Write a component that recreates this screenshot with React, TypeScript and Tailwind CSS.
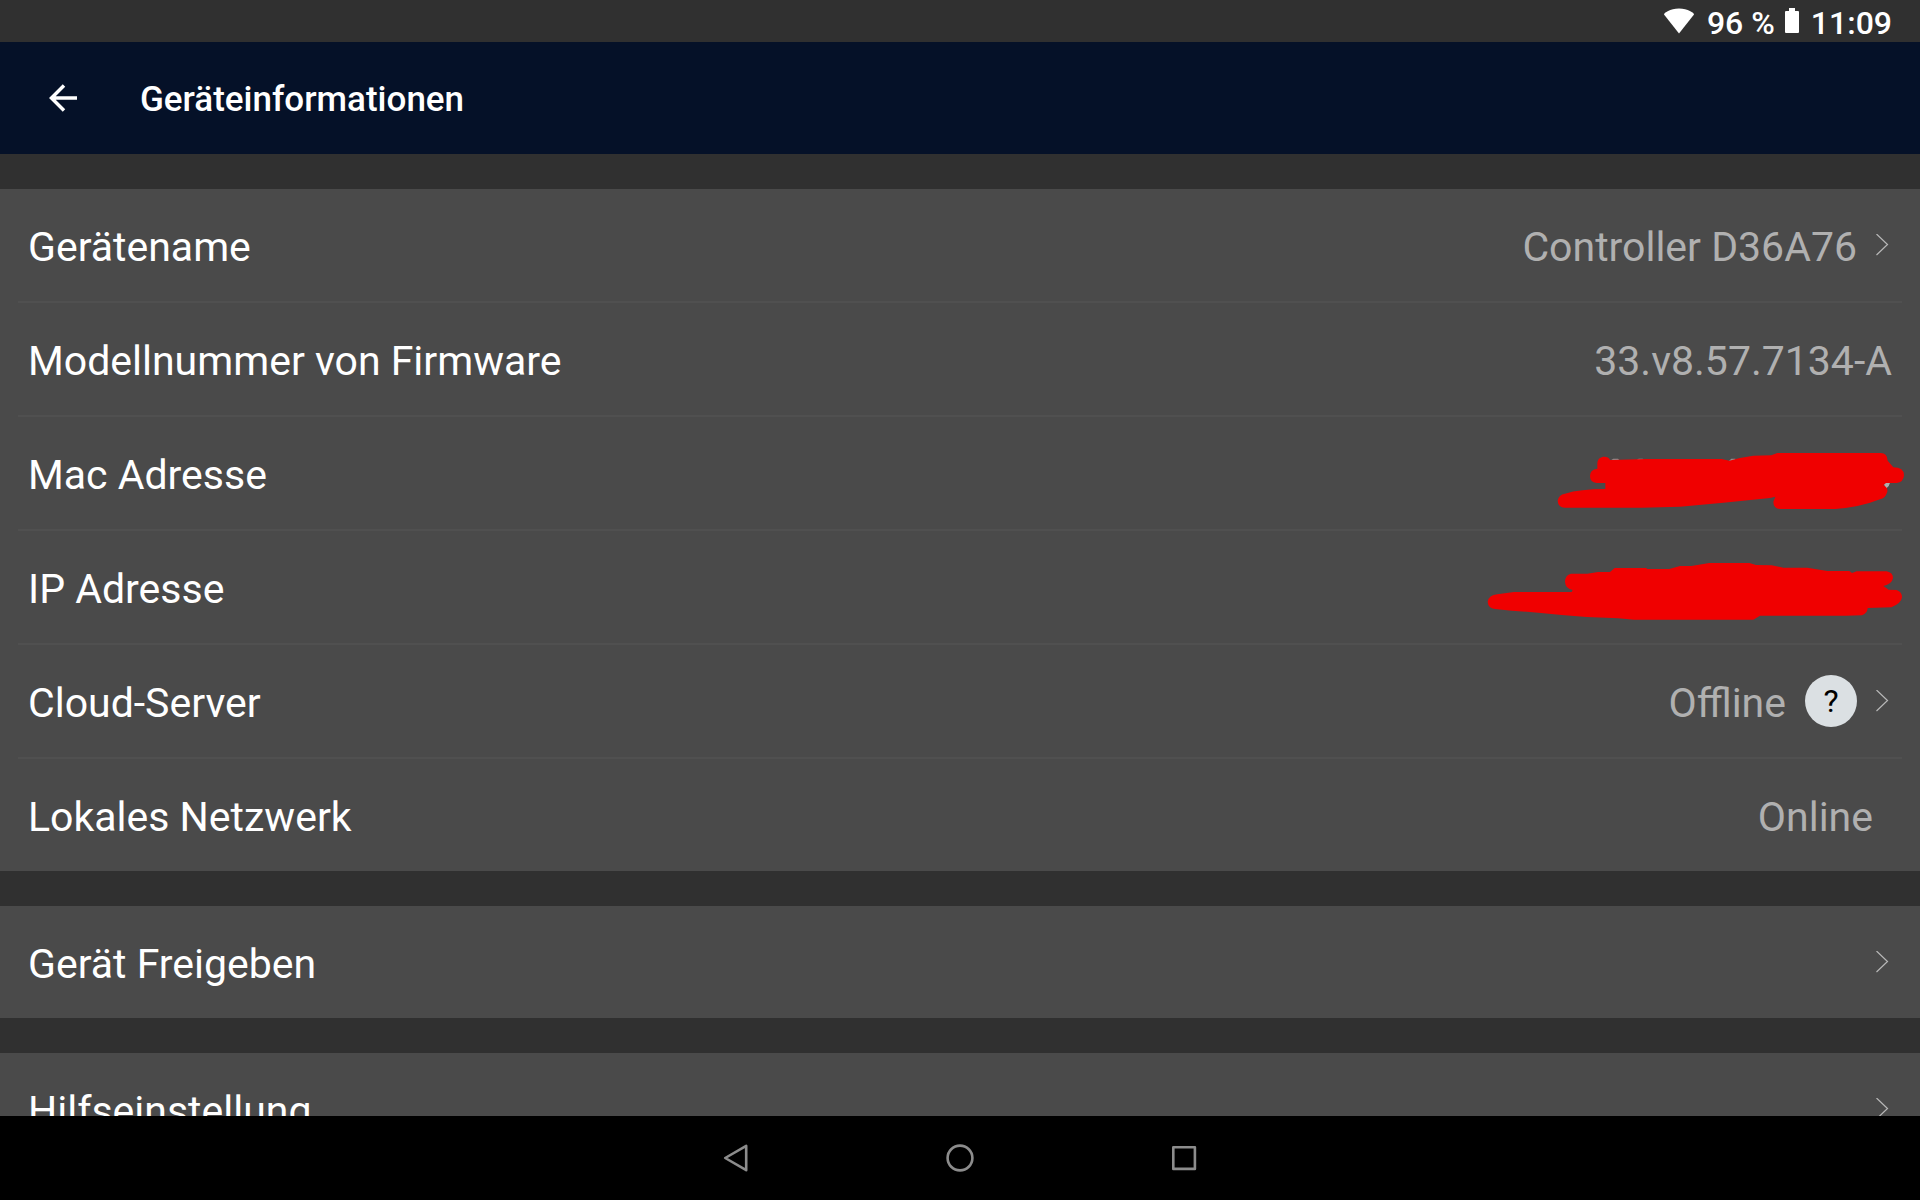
import type { ReactNode } from "react"

type InfoRow = {
    label: string
    content?: ReactNode
    isLink?: boolean
}

const infoRows: InfoRow[] = [
    { label: 'Gerätename', content: <Value>Controller D36A76</Value>, isLink: true },
    { label: 'Modellnummer von Firmware', content: <Value>33.v8.57.7134-A</Value> },
    { label: 'Mac Adresse', content: <MacScribble /> },
    { label: 'IP Adresse', content: <IpScribble /> },
    { label: 'Cloud-Server', content: <CloudStatus />, isLink: true },
    { label: 'Lokales Netzwerk', content: <div className="flex pr-[19px]"><Value>Online</Value></div> },
]

export default function App() {
    return (
        <div className="flex h-screen flex-col overflow-hidden bg-[#303030] font-[Roboto,sans-serif] text-white">
            <StatusBar />
            <Header />
            <main className="flex min-h-0 flex-1 flex-col gap-[35px] overflow-hidden pt-[35px]">
                <Section rows={infoRows} />
                <Section rows={[{ label: 'Gerät Freigeben', isLink: true }]} />
                <Section rows={[{ label: 'Hilfseinstellung', isLink: true }]} />
            </main>
            <NavBar />
        </div>
    )
}

function StatusBar() {
    return (
        <div className="flex h-[42px] shrink-0 items-center justify-end px-7 pt-1 text-[32px] leading-9 font-medium">
            <svg className="mr-3 mb-1 h-[26px] w-8" viewBox="0 0 32 26" fill="currentColor">
                <path d="M16 25.5 L1 6.5 C1 5 7 .6 16 .6 S31 5 31 6.5 Z" />
            </svg>
            <span>96 %</span>
            <svg className="mr-2.5 ml-2 mb-1 h-[26px] w-[18px]" viewBox="0 0 18 26" fill="currentColor">
                <path d="M6 0 H12 V3 H15 Q16 3 16 4 V24 Q16 25 15 25 H3 Q2 25 2 24 V4 Q2 3 3 3 H6 Z" />
            </svg>
            <span>11:09</span>
        </div>
    )
}

function Header() {
    return (
        <header className="flex h-28 shrink-0 items-center bg-[#051128] px-11">
            <button aria-label="Zurück" className="mr-14 flex h-10 w-10 items-center">
                <svg className="h-10 w-10" viewBox="0 0 40 40" fill="none" stroke="currentColor" strokeWidth="3.5">
                    <path d="M33 20 H7 M20 7.5 L7.5 20 L20 32.5" />
                </svg>
            </button>
            <h1 className="pt-1 text-[35px] leading-10 font-medium">Geräteinformationen</h1>
        </header>
    )
}

function Section({ rows }: { rows: InfoRow[] }) {
    return (
        <ul className="shrink-0 bg-[#4a4a4a]">
            {rows.map((row, idx) => (
                <li key={row.label}>
                    {idx > 0 && <div className="mx-[18px] h-0.5 bg-[#505050]" />}
                    <Row {...row} />
                </li>
            ))}
        </ul>
    )
}

function Row({ label, content, isLink }: InfoRow) {
    const rowClass = "flex h-28 w-full items-center px-7 text-left text-[41px] leading-[48px]"
    const inner = <>
        <span className="flex-1 pt-1">{label}</span>
        {content}
        {isLink && <Chevron />}
    </>

    if (isLink) return <a href="#" className={rowClass}>{inner}</a>
    return <div className={rowClass}>{inner}</div>
}

function Value({ children }: { children: ReactNode }) {
    return <span className="pt-1 text-[#b0b0b0]">{children}</span>
}

function CloudStatus() {
    return (
        <>
            <Value>Offline</Value>
            <span className="ml-[19px] flex h-[52px] w-[52px] items-center justify-center rounded-full bg-[#dbe0e3] text-[32px] text-black">?</span>
        </>
    )
}

function Chevron() {
    return (
        <svg className="ml-[19px] h-[22px] w-4" viewBox="0 0 16 22" fill="none" stroke="#b8b8b8" strokeWidth="1.2">
            <path d="M.5 0 L11.5 10.5 L.5 21" />
        </svg>
    )
}

function MacScribble() {
    return (
        <svg className="-mr-4 h-28 w-[360px]" viewBox="24 -39 1080 336">
            <path fill="#909090" d="M214 90 L220 86 H234 L240 92 Z M290 90 L296 86 H308 L314 92 Z M566 94 L574 86 H586 V92 Z" />
            <path fill="#b0b0b0" d="M1030 158 H1050 L1046 168 L1038 176 Z" />
            <path fill="#f00000" d="M172 101 C172 76 205 76 210 90 L320 87 H545 L568 92 L600 84 L640 77 L694 76 L712 69 H1022 Q1042 69 1043 92 L1060 112 Q1092 112 1092 136 Q1090 158 1070 159 H1038 L1030 166 Q1044 172 1042 185 Q1036 205 1020 208 Q960 232 886 237 H720 Q700 235 700 215 L706 200 L690 204 L550 218 L420 230 L304 233 H75 Q54 232 53 212 Q56 194 75 191 Q120 177 196 177 V159 H170 Q150 157 150 138 Q150 118 172 116 Z" />
        </svg>
    )
}

function IpScribble() {
    return (
        <svg className="-mr-4 h-28 w-[430px]" viewBox="24 -27 1290 336">
            <path fill="#f00000" d="M285 125 Q286 104 303 101 H352 L384 96 H420 L434 84 H530 V87 H598 L630 78 H664 L718 69 H838 L858 75 L905 76 L940 83 H1012 L1072 93 H1138 L1146 99 L1160 94 H1250 Q1269 98 1269 114 Q1266 132 1240 138 L1256 149 L1280 150 Q1296 156 1296 172 Q1294 190 1264 202 L1193 204 Q1193 220 1176 226 L1128 227 H870 L850 239 H492 L445 235 L350 231 L275 225 L205 218 L125 212 L75 207 Q54 204 53 185 Q56 166 82 163 L132 156 H305 L308 150 Q286 146 285 125 Z" />
        </svg>
    )
}

function NavBar() {
    const btnClass = "flex w-56 items-center justify-center"

    return (
        <nav className="flex h-[84px] shrink-0 justify-center bg-black text-[#8c8c8c]">
            <button aria-label="Zurück" className={btnClass}>
                <svg className="h-8 w-8" viewBox="0 0 32 32" fill="none" stroke="currentColor" strokeWidth="2.6" strokeLinejoin="round">
                    <path d="M26.2 3.8 V28.2 L5.2 16 Z" />
                </svg>
            </button>
            <button aria-label="Startseite" className={btnClass}>
                <svg className="h-8 w-8" viewBox="0 0 32 32" fill="none" stroke="currentColor" strokeWidth="2.6">
                    <circle cx="16" cy="16" r="12.4" />
                </svg>
            </button>
            <button aria-label="Übersicht" className={btnClass}>
                <svg className="h-8 w-8" viewBox="0 0 32 32" fill="none" stroke="currentColor" strokeWidth="2.6" strokeLinejoin="round">
                    <rect x="5.3" y="5.3" width="21.6" height="21.6" />
                </svg>
            </button>
        </nav>
    )
}
